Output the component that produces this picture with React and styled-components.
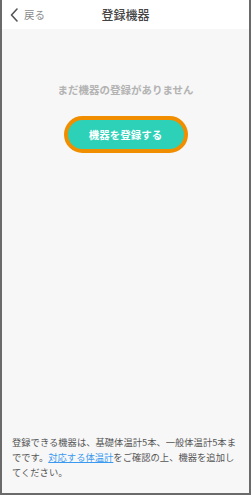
import styled, { createGlobalStyle } from 'styled-components'

const GlobalStyle = createGlobalStyle`
  html, body {
    margin: 0;
    padding: 0;
    background: #ffffff;
  }
  * {
    box-sizing: border-box;
  }
`

function App() {
  return (
    <>
      <GlobalStyle />
      <Frame>
        <Header>
          <BackButton>
            <svg width="8" height="14" viewBox="0 0 8 14">
              <path d="M7 1 L1.5 7 L7 13" fill="none" stroke="#555" strokeWidth="1.6" strokeLinecap="round" strokeLinejoin="round" />
            </svg>
            <span>戻る</span>
          </BackButton>
          <Title>登録機器</Title>
        </Header>

        <Body>
          <EmptyMessage>まだ機器の登録がありません</EmptyMessage>
          <RegisterButton>機器を登録する</RegisterButton>
        </Body>

        <Footer>
          登録できる機器は、基礎体温計5本、一般体温計5本までです。
          <Link>対応する体温計</Link>をご確認の上、機器を追加してください。
        </Footer>
      </Frame>
    </>
  )
}

export default App

const Frame = styled.div`
  width: 251px;
  height: 495px;
  display: flex;
  flex-direction: column;
  background: #f7f7f7;
  border: 2px solid #6a6a6a;
  border-top: none;
  font-family: "Noto Sans CJK JP", "Noto Sans", sans-serif;
`

const Header = styled.header`
  position: relative;
  height: 29px;
  display: flex;
  align-items: center;
  justify-content: center;
  background: #ffffff;
`

const BackButton = styled.div`
  position: absolute;
  left: 8px;
  top: 0;
  height: 29px;
  display: flex;
  align-items: center;
  gap: 6px;
  color: #8a8a8a;
  font-size: 10.5px;

  svg {
    display: block;
  }
`

const Title = styled.h1`
  margin: 0;
  font-size: 12px;
  font-weight: 500;
  color: #444;
`

const Body = styled.main`
  display: flex;
  flex-direction: column;
  align-items: center;
  padding-top: 53px;
`

const EmptyMessage = styled.p`
  margin: 0;
  font-size: 10.5px;
  font-weight: 700;
  color: #b3b3b3;
  line-height: 16px;
`

const RegisterButton = styled.button`
  margin-top: 18px;
  width: 124px;
  height: 37px;
  border: 4px solid #f08e00;
  border-radius: 19px;
  background: #2cd1b8;
  color: #ffffff;
  font-family: inherit;
  font-size: 10.5px;
  font-weight: 700;
  padding: 0;
`

const Footer = styled.p`
  margin: auto 0 0;
  padding: 0 10px 13px 10px;
  font-size: 9.3px;
  line-height: 15px;
  color: #555;
`

const Link = styled.span`
  color: #3a9af0;
  text-decoration: underline;
`
